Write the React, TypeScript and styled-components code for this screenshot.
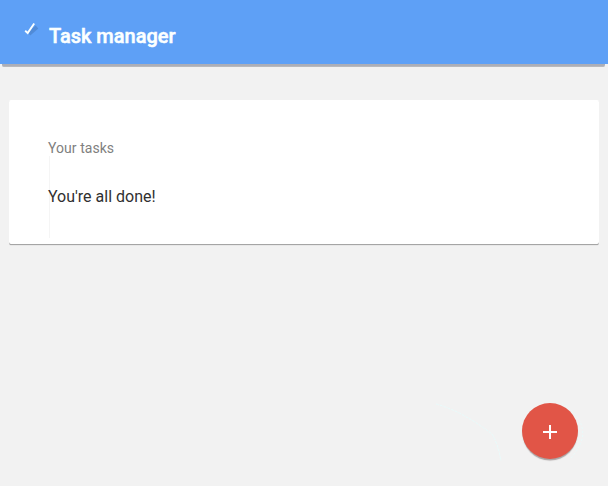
import React from "react";
import styled, { createGlobalStyle } from "styled-components";

const GlobalStyle = createGlobalStyle`
  * { box-sizing: border-box; }
  html, body { margin: 0; background: #f2f2f2; }
  body { font-family: Roboto, "Liberation Sans", sans-serif; overflow: hidden; }
`;

const Page = styled.div`
  height: 486px;
  width: 608px;
  background: #f2f2f2;
`;

const Header = styled.header`
  height: 64px;
  display: flex;
  align-items: flex-start;
  padding-left: 23px;
  background: #5ea0f6;
  color: #fbffff;
`;

const HeaderEdge = styled.div`
  height: 3px;
  margin: 0 3px 0 2px;
  border-bottom: 1px solid #b8b9bd;
  border-radius: 0 0 2px 2px;
  background: #acaeb7;
`;

const CheckIcon = styled.svg`
  flex: none;
  width: 18px;
  height: 16px;
  margin: 22px 8px 0 0;
`;

const Title = styled.h1`
  margin: 0;
  padding-top: 24px;
  font-size: 20px;
  line-height: 24px;
  font-weight: 500;
  -webkit-text-stroke: 0.5px #fbffff;
`;

const Card = styled.main`
  margin: 33px 9px 0;
  height: 144px;
  padding: 40px 39px 0;
  background: #fff;
  border-radius: 2px;
  box-shadow: 0 1px 0 #a5a5a5, 0 2px 1px -1px #8e8e8e;
`;

const Tasks = styled.section`
  height: 98px;
  background: linear-gradient(#f5f5f5, #f5f5f5) 1px 16px / 1px 82px no-repeat;
`;

const Label = styled.h2`
  margin: 0 0 31px;
  font-size: 14px;
  line-height: 16px;
  font-weight: 400;
  letter-spacing: 0.05px;
  color: #808080;
`;

const Message = styled.p`
  margin: 0;
  font-size: 16px;
  line-height: 20px;
  color: #303030;
`;

const Trail = styled.svg`
  position: fixed;
  left: 434px;
  top: 400px;
  width: 160px;
  height: 64px;
  pointer-events: none;
`;

const AddButton = styled.button`
  position: fixed;
  right: 30px;
  bottom: 27px;
  width: 56px;
  height: 56px;
  padding: 0;
  display: grid;
  place-items: center;
  border: 0;
  border-radius: 50%;
  background: #e15547;
  box-shadow: 0 2px 1px -0.5px #aaa3a3;

  svg {
    margin-top: 2px;
  }
`;

export default function App() {
  return (
    <Page>
      <GlobalStyle />
      <Header>
        <CheckIcon viewBox="0 0 18 16" fill="none">
          <path d="M6 12L14 5" stroke="#508bd8" strokeWidth="4" />
          <path d="M2.2 8.8L4.7 11L11.2 1.5" stroke="#fbffff" strokeWidth="1.9" />
        </CheckIcon>
        <Title>Task manager</Title>
      </Header>
      <HeaderEdge />
      <Card>
        <Tasks>
          <Label>Your tasks</Label>
          <Message>You're all done!</Message>
        </Tasks>
      </Card>
      <Trail viewBox="0 0 160 64" fill="none" stroke="#e8fafa">
        <path d="M2 4Q28 11 58 34Q64 44 67 61" strokeDasharray="3 1" />
        <path d="M128 3Q165 28 136 59" strokeDasharray="2 2" />
      </Trail>
      <AddButton aria-label="Add task">
        <svg width="14" height="14" viewBox="0 0 14 14" fill="#fff">
          <path d="M6 0h2v6h6v2H8v6H6V8H0V6h6z" />
        </svg>
      </AddButton>
    </Page>
  );
}
